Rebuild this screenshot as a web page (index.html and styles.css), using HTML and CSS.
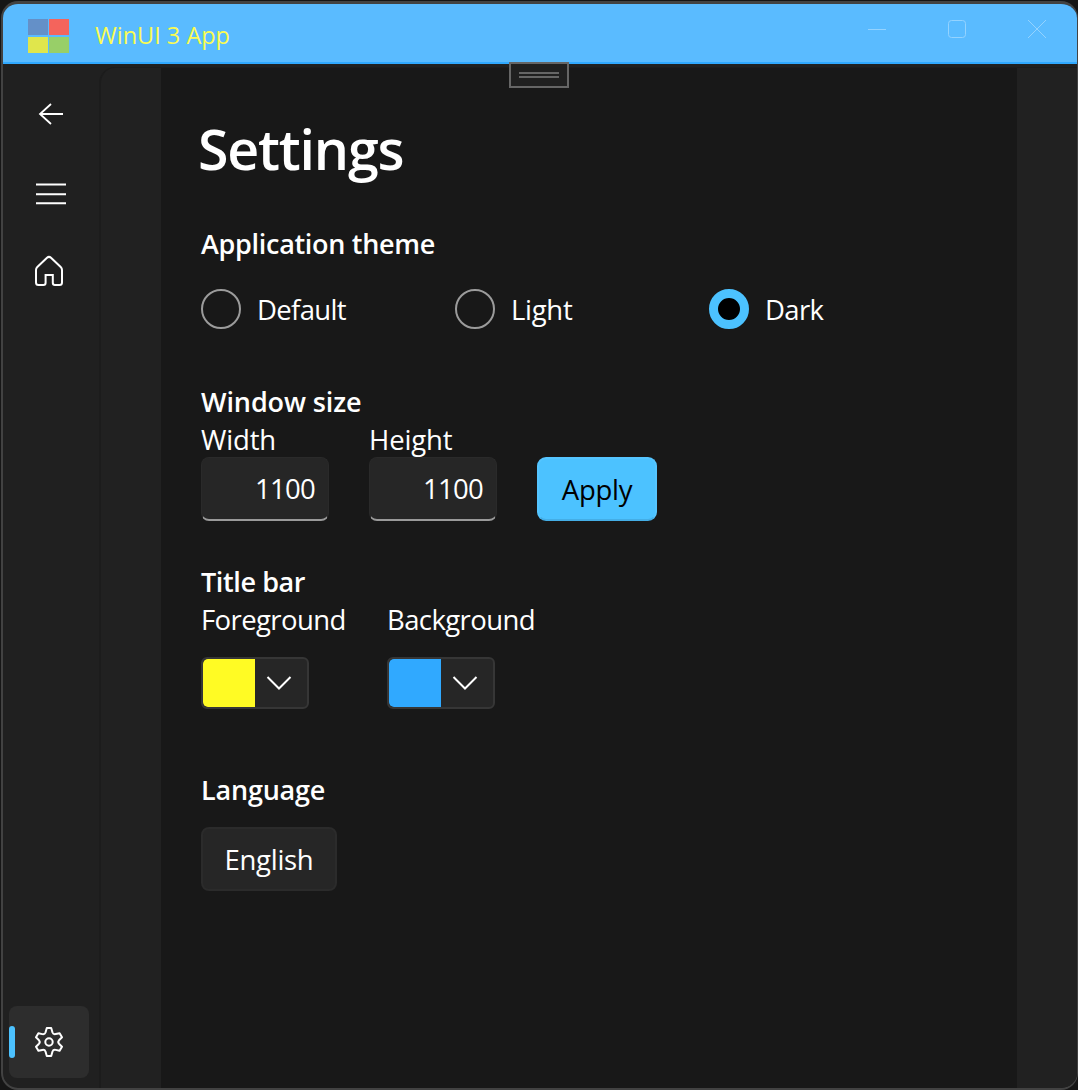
FILE: index.html
```html
<!DOCTYPE html>
<html lang="en">
<head>
<meta charset="utf-8">
<title>WinUI 3 App</title>
<link rel="stylesheet" href="styles.css">
</head>
<body>
<div class="window">
  <header class="titlebar">
    <div class="logo"><i class="blue"></i><i class="red"></i><i class="yellow"></i><i class="green"></i></div>
    <span class="app-name">WinUI 3 App</span>
    <div class="captions">
      <svg viewBox="0 0 80 60"><path d="M25 25.5H43"/></svg>
      <svg viewBox="0 0 80 60"><rect x="25.5" y="16.5" width="17" height="17" rx="3"/></svg>
      <svg viewBox="0 0 80 60"><path d="M25 16L43 34M43 16L25 34"/></svg>
    </div>
    <div class="debug-bar"><i></i><i></i></div>
  </header>
  <div class="body">
    <nav class="nav">
      <a class="nav-item"><svg viewBox="0 0 80 72"><path class="thin" d="M54 36H31M42 26L31 36L42 46"/></svg></a>
      <a class="nav-item"><svg viewBox="0 0 80 72"><path d="M27 26.500H57M27 36.300H57M27 45.200H57"/></svg></a>
      <a class="nav-item"><svg viewBox="0 0 80 72"><path d="M38 19.800Q40 18 42 19.800L51.700 29Q53 30.300 53 32V44.500Q53 47 50.500 47H46Q43.800 47 43.800 44.800V37H36.600V44.800Q36.600 47 34.400 47H29.500Q27 47 27 44.500V32Q27 30.300 28.300 29Z"/></svg></a>
      <a class="nav-item selected"><svg viewBox="0 0 80 72"><circle cx="40" cy="36" r="3.700"/><path d="M37.800 22H42.200L43.500 26.500Q44.300 28.600 46.700 28.100L50.600 27.200L53 31.300L50 34.300Q48.500 36 50 37.700L53 40.700L50.600 44.800L46.700 43.900Q44.300 43.400 43.500 45.500L42.200 50H37.800L36.500 45.500Q35.700 43.400 33.300 43.900L29.400 44.800L27 40.700L30 37.700Q31.500 36 30 34.300L27 31.300L29.400 27.200L33.300 28.100Q35.700 28.600 36.500 26.500Z" stroke-linejoin="round"/></svg></a>
    </nav>
    <div class="frame">
      <main class="page">
        <h1>Settings</h1>
        <h2 class="theme-title">Application theme</h2>
        <div class="radios">
          <label class="radio"><i></i><span>Default</span></label>
          <label class="radio"><i></i><span class="light">Light</span></label>
          <label class="radio checked"><i></i><span>Dark</span></label>
        </div>
        <h2 class="size-title">Window size</h2>
        <div class="sizes">
          <div class="field"><span>Width</span><div class="input">1100</div></div>
          <div class="field"><span>Height</span><div class="input">1100</div></div>
          <div class="apply">Apply</div>
        </div>
        <h2 class="bar-title">Title bar</h2>
        <div class="colors">
          <div class="color"><span>Foreground</span><div class="picker"><i class="fg"></i><svg viewBox="0 0 52 48"><path d="M12.500 18L24 29.500L35.500 18"/></svg></div></div>
          <div class="color"><span>Background</span><div class="picker"><i class="bg"></i><svg viewBox="0 0 52 48"><path d="M12.500 18L24 29.500L35.500 18"/></svg></div></div>
        </div>
        <h2 class="lang-title">Language</h2>
        <div class="language">English</div>
      </main>
    </div>
  </div>
</div>
</body>
</html>
```
FILE: styles.css
```css
* { box-sizing: border-box; }
html, body { height: 100%; }
body {
  margin: 0;
  padding: 1px 0 0 1px;
  overflow: hidden;
  background: #161616;
  color: #fff;
  font: 27.5px/38px "Open Sans", "Noto Sans", sans-serif;
  letter-spacing: -0.3px;
  white-space: nowrap;
}
h1, h2 { margin: 0; font-weight: 600; }
svg { display: block; fill: none; stroke: #fff; }
.window {
  display: flex;
  flex-direction: column;
  height: 1089px;
  border: 2px solid #424242;
  border-top-width: 3px;
  border-right-width: 1px;
  border-radius: 17px;
  overflow: hidden;
  background: #202020;
}
.titlebar {
  position: relative;
  display: flex;
  flex: none;
  align-items: center;
  height: 60px;
  padding-left: 25px;
  background: #5abbff;
  border-bottom: 2px solid #30a9ff;
}
.logo {
  display: grid;
  grid-template-columns: 20px 20px;
  gap: 2px 1px;
  margin-top: 5px;
}
.logo i { height: 16px; }
.blue { background: #6490c8; }
.red { background: #f4645c; }
.yellow { background: #e0e64c; }
.green { background: #98cf68; }
.app-name {
  margin: 4px 0 0 26px;
  color: #fbfb52;
  font-size: 23.5px;
  letter-spacing: 0;
}
.captions { display: flex; margin: 2px -6px 0 auto; }
.captions svg { width: 80px; height: 60px; stroke: #94d3ff; }
.debug-bar {
  position: absolute;
  left: 506px;
  top: 58px;
  display: grid;
  align-content: center;
  justify-content: center;
  gap: 2px;
  width: 60px;
  height: 26px;
  border: 2px solid #666;
  background: #202020;
}
.debug-bar i { width: 40px; height: 2px; background: #666; }
.body { display: flex; flex: 1; min-height: 0; }
.nav {
  display: flex;
  flex-direction: column;
  gap: 8px;
  width: 96px;
  padding: 14px 0 10px 6px;
}
.nav-item { width: 80px; height: 72px; border-radius: 8px; }
.nav-item svg { width: 80px; height: 72px; stroke-width: 2; }
.nav-item .thin { stroke-width: 1.8; }
.selected {
  position: relative;
  margin-top: auto;
  background: #2d2d2d;
}
.selected::before {
  content: "";
  position: absolute;
  left: 0;
  top: 20px;
  width: 6px;
  height: 32px;
  border-radius: 3px;
  background: #4cc2ff;
}
.frame {
  flex: 1;
  margin-top: 3px;
  padding: 0 60px;
  border: 1px solid #1c1c1c;
  border-width: 1px 0 0 2px;
  border-radius: 16px 0 0 0;
  background: #212121;
}
.page {
  height: 100%;
  padding: 43px 40px 0;
  background: #181818;
}
h1 {
  margin-left: -3px;
  font-size: 55.5px;
  line-height: 76px;
  letter-spacing: -1.2px;
}
h2 { font-size: 27px; letter-spacing: -0.3px; }
.theme-title { margin-top: 38px; }
.radios { display: flex; margin-top: 26px; }
.radio { display: flex; align-items: center; gap: 16px; width: 254px; height: 40px; }
.radio i { width: 40px; height: 40px; border: 2px solid #9b9b9b; border-radius: 50%; }
.radio span { padding-top: 2px; letter-spacing: -0.65px; }
.radio .light { letter-spacing: -0.3px; }
.checked i { border: 9px solid #4cc2ff; background: #000; }
.size-title { margin-top: 54px; letter-spacing: -0.1px; }
.sizes { display: flex; align-items: flex-end; gap: 40px; }
.field { display: flex; flex-direction: column; }
.field span { height: 36px; letter-spacing: -0.15px; }
.input {
  width: 128px;
  height: 64px;
  padding-right: 13px;
  border: 1px solid #2a2a2a;
  border-bottom: 2px solid #9a9a9a;
  border-radius: 8px;
  background: #262626;
  line-height: 62px;
  letter-spacing: -0.7px;
  text-align: right;
}
.apply {
  width: 120px;
  height: 64px;
  border: 2px solid #55c5ff;
  border-bottom-color: #44aee6;
  border-radius: 9px;
  background: #4cc2ff;
  color: #000;
  line-height: 62px;
  text-align: center;
}
.bar-title { margin-top: 42px; letter-spacing: -0.4px; }
.colors { display: flex; }
.color { width: 186px; }
.color span { display: block; letter-spacing: -0.6px; }
.picker {
  display: flex;
  width: 108px;
  height: 52px;
  margin-top: 18px;
  border: 2px solid #363636;
  border-radius: 6px;
  overflow: hidden;
  background: #262626;
}
.picker i { width: 52px; border-radius: 5px 0 0 5px; }
.picker svg { width: 52px; height: 48px; stroke-width: 2; }
.fg { background: #fffb24; }
.bg { background: #30a9ff; }
.lang-title { margin-top: 62px; letter-spacing: -0.2px; }
.language {
  width: 136px;
  height: 64px;
  margin-top: 18px;
  border: 2px solid #2b2b2b;
  border-radius: 8px;
  background: #262626;
  line-height: 61px;
  text-align: center;
}
```
